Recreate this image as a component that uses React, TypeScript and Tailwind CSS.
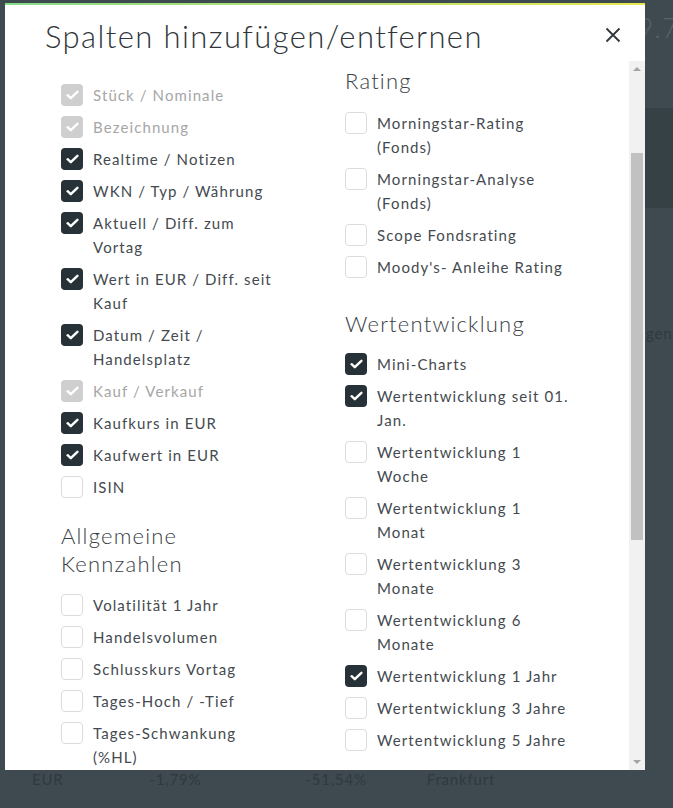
import React from 'react';

type Item = { lines: string[]; state: 'on' | 'off' | 'locked' };

const leftItems: Item[] = [
  { lines: ['Stück / Nominale'], state: 'locked' },
  { lines: ['Bezeichnung'], state: 'locked' },
  { lines: ['Realtime / Notizen'], state: 'on' },
  { lines: ['WKN / Typ / Währung'], state: 'on' },
  { lines: ['Aktuell / Diff. zum', 'Vortag'], state: 'on' },
  { lines: ['Wert in EUR / Diff. seit', 'Kauf'], state: 'on' },
  { lines: ['Datum / Zeit /', 'Handelsplatz'], state: 'on' },
  { lines: ['Kauf / Verkauf'], state: 'locked' },
  { lines: ['Kaufkurs in EUR'], state: 'on' },
  { lines: ['Kaufwert in EUR'], state: 'on' },
  { lines: ['ISIN'], state: 'off' },
];

const kennzahlen: Item[] = [
  { lines: ['Volatilität 1 Jahr'], state: 'off' },
  { lines: ['Handelsvolumen'], state: 'off' },
  { lines: ['Schlusskurs Vortag'], state: 'off' },
  { lines: ['Tages-Hoch / -Tief'], state: 'off' },
  { lines: ['Tages-Schwankung', '(%HL)'], state: 'off' },
];

const rating: Item[] = [
  { lines: ['Morningstar-Rating', '(Fonds)'], state: 'off' },
  { lines: ['Morningstar-Analyse', '(Fonds)'], state: 'off' },
  { lines: ['Scope Fondsrating'], state: 'off' },
  { lines: ["Moody's- Anleihe Rating"], state: 'off' },
];

const wertentwicklung: Item[] = [
  { lines: ['Mini-Charts'], state: 'on' },
  { lines: ['Wertentwicklung seit 01.', 'Jan.'], state: 'on' },
  { lines: ['Wertentwicklung 1', 'Woche'], state: 'off' },
  { lines: ['Wertentwicklung 1', 'Monat'], state: 'off' },
  { lines: ['Wertentwicklung 3', 'Monate'], state: 'off' },
  { lines: ['Wertentwicklung 6', 'Monate'], state: 'off' },
  { lines: ['Wertentwicklung 1 Jahr'], state: 'on' },
  { lines: ['Wertentwicklung 3 Jahre'], state: 'off' },
  { lines: ['Wertentwicklung 5 Jahre'], state: 'off' },
];

function Box({ state }: { state: Item['state'] }) {
  if (state === 'off') {
    return <div className="mt-[1px] w-[22px] h-[22px] shrink-0 rounded-[4px] border-[1.5px] border-[#dcdcdc] bg-white" />;
  }
  return (
    <div
      className={`mt-[1px] w-[22px] h-[22px] shrink-0 rounded-[4px] flex items-center justify-center ${
        state === 'on' ? 'bg-[#263238]' : 'bg-[#cfcfcf]'
      }`}
    >
      <svg width="13" height="10" viewBox="0 0 13 10" fill="none">
        <path d="M1.6 5.2 L4.8 8.2 L11.4 1.8" stroke="#fff" strokeWidth="2.4" strokeLinecap="round" strokeLinejoin="round" />
      </svg>
    </div>
  );
}

function Row({ item }: { item: Item }) {
  return (
    <div className="flex items-start gap-[10px] py-[4px]">
      <Box state={item.state} />
      <div className={`text-[15px] leading-6 tracking-[1.1px] ${item.state === 'locked' ? 'text-[#a6a6a6]' : 'text-[#444a4f]'}`}>
        {item.lines.map((l, i) => (
          <div key={i} className="whitespace-nowrap">{l}</div>
        ))}
      </div>
    </div>
  );
}

function Heading({ children, className = '' }: { children: React.ReactNode; className?: string }) {
  return <div className={`text-[22px] leading-[28px] font-light tracking-[1.2px] text-[#3a4045] ${className}`}>{children}</div>;
}

export default function App() {
  return (
    <div className="relative w-[673px] h-[808px] overflow-hidden bg-[#3e4a50]" style={{ fontFamily: 'Lato, "Noto Sans", sans-serif' }}>
      {/* dimmed page behind the dialog */}
      <div className="absolute left-[645px] top-[108px] w-[28px] h-[100px] bg-[#364146]" />
      <div className="absolute left-[637px] top-[6px] text-[28px] font-light tracking-[1px] text-[#56636a]">9.7</div>
      <div className="absolute left-[646px] top-[322px] text-[15px] tracking-[0.8px] text-[#2f393e]">gen</div>
      <div className="absolute left-0 top-[768px] w-[673px] flex text-[15px] tracking-[0.8px] text-[#2f393e]">
        <span className="ml-[32px]">EUR</span>
        <span className="ml-[86px]">-1,79%</span>
        <span className="ml-[104px]">-51,54%</span>
        <span className="ml-[60px]">Frankfurt</span>
      </div>

      {/* dialog */}
      <div className="absolute left-[5px] top-[3px] w-[640px] h-[767px] bg-white flex flex-col">
        <div className="h-[2px] bg-gradient-to-r from-[#86dc8a] to-[#e8e84e]" />
        <div className="flex items-start justify-between pl-[40px] pr-[24px] h-[56px]">
          <div className="mt-[13px] text-[31px] leading-[36px] font-light tracking-[1.4px] text-[#2f353a]">Spalten hinzufügen/entfernen</div>
          <svg className="mt-[22px]" width="16" height="16" viewBox="0 0 16 16">
            <path d="M1.5 1.5 L14.5 14.5 M14.5 1.5 L1.5 14.5" stroke="#2f353a" strokeWidth="1.8" />
          </svg>
        </div>

        <div className="flex flex-1 min-h-0">
          <div className="flex-1 overflow-hidden flex pl-[56px]">
            <div className="w-[284px] shrink-0 pt-[18px]">
              {leftItems.map((it, i) => (
                <Row key={i} item={it} />
              ))}
              <Heading className="mt-[19px] mb-[11px]">
                Allgemeine
                <br />
                Kennzahlen
              </Heading>
              {kennzahlen.map((it, i) => (
                <Row key={i} item={it} />
              ))}
            </div>
            <div className="flex-1 pt-[6px]">
              <Heading className="mb-[12px]">Rating</Heading>
              {rating.map((it, i) => (
                <Row key={i} item={it} />
              ))}
              <Heading className="mt-[27px] mb-[10px]">Wertentwicklung</Heading>
              {wertentwicklung.map((it, i) => (
                <Row key={i} item={it} />
              ))}
            </div>
          </div>

          {/* scrollbar */}
          <div className="w-[16px] shrink-0 bg-[#f1f1f1] flex flex-col">
            <div className="h-[16px] flex items-center justify-center">
              <div className="w-0 h-0 border-l-[4px] border-r-[4px] border-b-[4px] border-l-transparent border-r-transparent border-b-[#a3a3a3]" />
            </div>
            <div className="h-[76px]" />
            <div className="h-[387px] mx-[2px] bg-[#c1c1c1]" />
            <div className="flex-1" />
            <div className="h-[16px] flex items-center justify-center">
              <div className="w-0 h-0 border-l-[4px] border-r-[4px] border-t-[4px] border-l-transparent border-r-transparent border-t-[#a3a3a3]" />
            </div>
          </div>
        </div>
      </div>
    </div>
  );
}
